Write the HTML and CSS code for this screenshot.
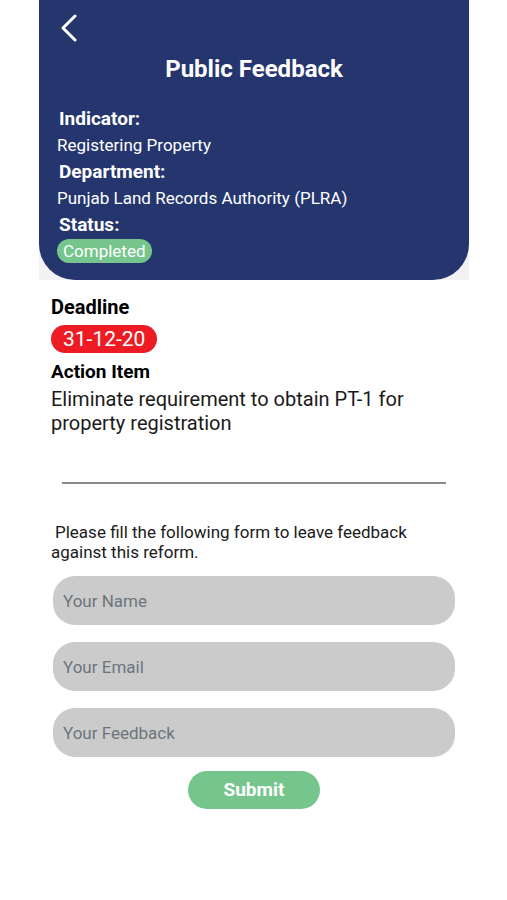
FILE: index.html
```
<!DOCTYPE html>
<html lang="en">
	<head>
		<meta charset="utf-8">
		<meta name="viewport" content="width=device-width, initial-scale=1">
		<title>Public Feedback</title>
		<link rel="stylesheet" href="styles.css">
	</head>
	<body>
		<div class="screen">
			<div class="header-wrap">
				<header class="header">
					<button class="back" type="button" aria-label="Back">
						<svg width="18" height="28" viewBox="0 0 18 28" fill="none" stroke="#fff" stroke-width="3" stroke-linecap="round" stroke-linejoin="round">
							<path d="M15 2 L3 14 L15 26"/>
						</svg>
					</button>
					<h1 class="title">Public Feedback</h1>
					<dl class="info">
						<dt>Indicator:</dt>
						<dd>Registering Property</dd>
						<dt>Department:</dt>
						<dd>Punjab Land Records Authority (PLRA)</dd>
						<dt>Status:</dt>
						<dd><span class="status">Completed</span></dd>
					</dl>
				</header>
			</div>
			<main class="content">
				<h2 class="heading">Deadline</h2>
				<span class="deadline">31-12-20</span>
				<h3 class="subheading">Action Item</h3>
				<p class="action">Eliminate requirement to obtain PT-1 for property registration</p>
				<hr class="line">
				<p class="hint">Please fill the following form to leave feedback against this reform.</p>
				<form class="form">
					<input class="field" type="text" name="name" placeholder="Your Name" aria-label="Your Name">
					<input class="field" type="email" name="email" placeholder="Your Email" aria-label="Your Email">
					<input class="field" type="text" name="feedback" placeholder="Your Feedback" aria-label="Your Feedback">
					<button class="submit" type="submit">Submit</button>
				</form>
			</main>
		</div>
	</body>
</html>
```
FILE: styles.css
```
*{
	margin: 0;
	padding: 0;
	box-sizing: border-box;
}
body{
	font-family: Roboto, "Liberation Sans", sans-serif;
	background-color: #fff;
	color: #000;
}
.screen{
	margin: 0 38px 0 39px;
}
/* shows as light corners under the rounded header */
.header-wrap{
	background-color: #f2f2f2;
}
.header{
	padding: 14px 18px 16px;
	background-color: #25366f;
	border-radius: 0 0 36px 36px;
	color: #fff;
}
.back{
	display: block;
	margin-left: 3px;
	border: none;
	background: none;
	cursor: pointer;
}
.back svg{
	display: block;
}
.title{
	margin: 12px 0 21px;
	font-size: 24px;
	line-height: 30px;
	text-align: center;
}
.info dt{
	padding-left: 2px;
	font-size: 19px;
	font-weight: bold;
	line-height: 27px;
}
.info dd{
	font-size: 17px;
	line-height: 26px;
}
.status{
	display: inline-block;
	padding: 0 6px;
	border-radius: 12px;
	background-color: #75c58c;
	line-height: 24px;
}
.content{
	padding: 13px 12px 24px;
}
.heading{
	font-size: 20px;
	line-height: 28px;
}
.subheading{
	font-size: 19px;
	line-height: 28px;
}
.deadline{
	display: block;
	width: fit-content;
	margin: 4px 0 5px;
	padding: 0 12px;
	border-radius: 14px;
	background-color: #ed1c24;
	color: #fff;
	font-size: 21px;
	line-height: 28px;
}
.action{
	padding-top: 1px;
	font-size: 20px;
	line-height: 24px;
	color: #1a1a1a;
}
.line{
	margin: 47px 11px 38px;
	border: none;
	border-top: 2px solid #8a8a8a;
}
.hint{
	font-size: 17px;
	line-height: 20px;
	text-indent: 4px;
	color: #1a1a1a;
}
.form{
	display: flex;
	flex-direction: column;
	gap: 17px;
	margin: 14px 2px 0;
}
.field{
	width: 100%;
	height: 49px;
	padding: 0 10px;
	border: none;
	border-radius: 22px;
	background-color: #cbcbcb;
	font-family: inherit;
	font-size: 17px;
}
.field::placeholder{
	color: #6c757d;
	opacity: 1;
}
.submit{
	align-self: center;
	margin-top: -3px;
	padding: 0 36px;
	border: none;
	border-radius: 19px;
	background-color: #75c58c;
	color: #fff;
	font-family: inherit;
	font-size: 19px;
	font-weight: bold;
	line-height: 38px;
	cursor: pointer;
}
```
